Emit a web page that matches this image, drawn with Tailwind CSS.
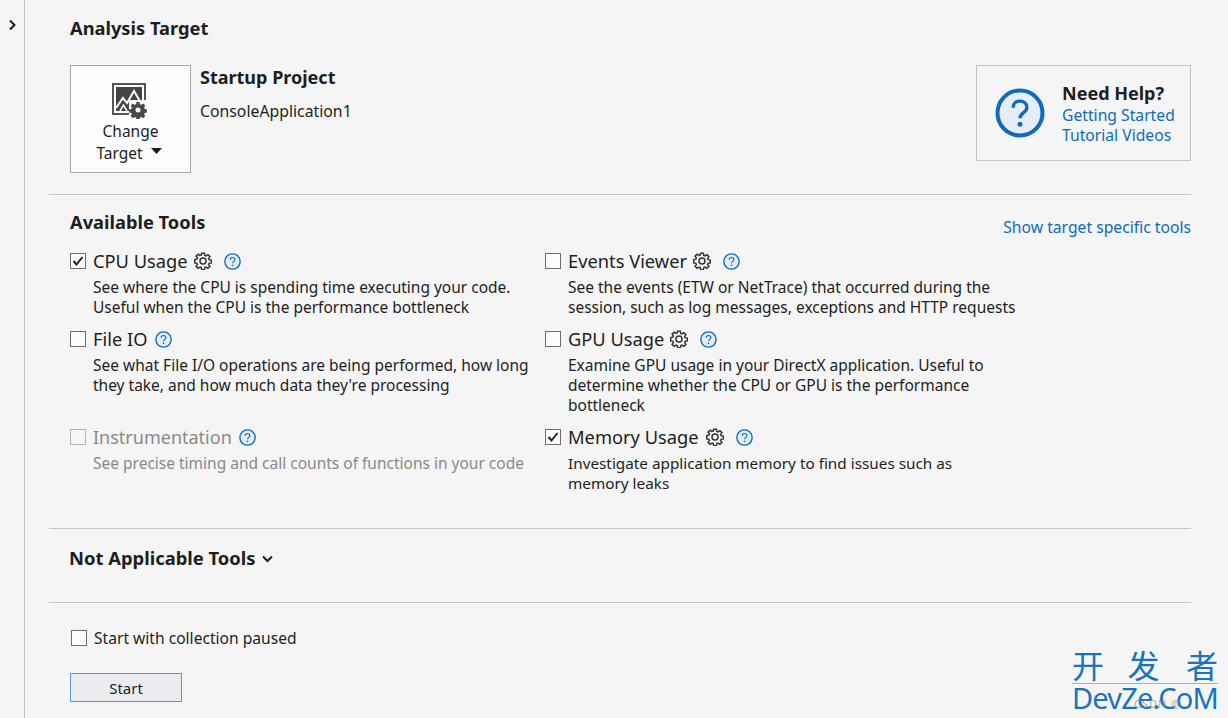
<!DOCTYPE html>
<html lang="en">
  <head>
    <meta charset="UTF-8" />
    <title>Performance Profiler</title>
    <script src="https://cdn.jsdelivr.net/npm/@tailwindcss/browser@4"></script>
  </head>
  <body class="bg-[#f5f5f5] font-['Noto_Sans','Noto_Sans_CJK_SC',sans-serif] text-[#1e1e1e] overflow-hidden">
    <svg class="hidden">
      <symbol id="gear" viewBox="0 0 18 18">
        <path fill="none" stroke="#333" stroke-width="1.500" d="M7.600 1.200h2.800l.4 2.200 1.200.5 1.900-1.300 2 2-1.300 1.900.5 1.200 2.200.4v2.800l-2.200.4-.5 1.200 1.300 1.900-2 2-1.900-1.300-1.200.5-.4 2.200H7.600l-.4-2.200-1.200-.5-1.900 1.300-2-2 1.300-1.900-.5-1.200-2.200-.4V7.600l2.200-.4.5-1.200-1.300-1.900 2-2 1.900 1.300 1.200-.5z" />
        <circle cx="9" cy="9" r="3" fill="none" stroke="#333" stroke-width="1.500" />
      </symbol>
      <symbol id="help" viewBox="0 0 16 16">
        <circle cx="8" cy="8" r="7.200" fill="#e6edf6" stroke="#0f6cbd" stroke-width="1.300" />
        <path fill="none" stroke="#0f6cbd" stroke-width="1.100" d="M5.800 6.300c0-1.300 1-2.100 2.200-2.100s2.200.8 2.200 2c0 1.700-2.200 1.700-2.200 3.500" />
        <circle cx="8" cy="11.600" r=".8" fill="#0f6cbd" />
      </symbol>
    </svg>

    <div class="flex h-[718px] w-[1228px]">
      <!-- collapsed rail -->
      <div class="w-[25px] shrink-0 border-r border-[#c4c4c4] pt-[19px] pl-[8px]">
        <svg class="w-[9px] h-[12px]" viewBox="0 0 9 12"><path fill="none" stroke="#1e1e1e" stroke-width="2" d="M2 1.500 6.500 6 2 10.500" /></svg>
      </div>

      <main class="ml-[24px] w-[1142px]">
        <!-- analysis target -->
        <section class="h-[195px] border-b border-[#c8c8c8] pl-[21px] pt-[14px]">
          <h2 class="text-[18.300px] leading-[27px] font-bold">Analysis Target</h2>
          <div class="flex mt-[24px]">
            <button class="w-[121px] h-[108px] bg-[#fcfcfc] border border-[#a8a8a8] flex flex-col items-center pt-[17px] text-[15.500px] leading-[22px]">
              <svg class="w-[36px] h-[36px] shrink-0 ml-[-1px]" viewBox="0 0 36 36">
                <rect x="1" y="1" width="32" height="30" fill="#fff" stroke="#555" stroke-width="2" />
                <rect x="4" y="4" width="26" height="24" fill="#444" />
                <path fill="none" stroke="#fff" stroke-width="2" d="M4 25 11 15 15 20 22 8 29 20" />
                <path fill="none" stroke="#fff" stroke-width="1.500" d="M8 28 11.500 22 15 28" />
                <path fill="#fcfcfc" d="M17 17h19v19H17z" />
                <path fill="#484848" fill-rule="evenodd" d="M24.500 19h3l.5 2.200 1.300.6 1.900-1.200 2.100 2.100-1.200 1.900.6 1.300 2.200.5v3l-2.200.5-.6 1.300 1.200 1.900-2.100 2.100-1.900-1.200-1.300.6-.5 1.900h-3l-.5-1.900-1.300-.6-1.900 1.200-2.100-2.100 1.200-1.900-.6-1.300-2.200-.5v-3l2.200-.5.6-1.300-1.200-1.900 2.100-2.100 1.900 1.200 1.300-.6zM26 24.500a2.500 2.500 0 1 0 0 5 2.500 2.500 0 0 0 0-5z" />
              </svg>
              <span class="mt-[1px]">Change</span>
              <span class="flex items-start pr-[3px]">Target
                <svg class="w-[11px] h-[6px] ml-[8px] mt-[6px]" viewBox="0 0 11 6"><path fill="#1e1e1e" d="M0 0h11L5.500 6z" /></svg>
              </span>
            </button>
            <div class="ml-[9px]">
              <h3 class="text-[18px] leading-[24px] font-bold">Startup Project</h3>
              <p class="text-[15.800px] leading-[22px] mt-[11px]">ConsoleApplication1</p>
            </div>
            <div class="ml-auto w-[215px] h-[96px] border border-[#c4c4c4] flex items-center pl-[18px]">
              <svg class="w-[50px] h-[50px] shrink-0" viewBox="0 0 16 16"><use href="#help" /></svg>
              <div class="ml-[17px]">
                <p class="text-[18px] leading-[22px] font-bold">Need Help?</p>
                <a class="block text-[#0f6cbd] text-[15.700px] leading-[20px] mt-[1px]">Getting Started</a>
                <a class="block text-[#0f6cbd] text-[15.700px] leading-[20px]">Tutorial Videos</a>
              </div>
            </div>
          </div>
        </section>

        <!-- available tools -->
        <section class="h-[334px] border-b border-[#c8c8c8] pl-[21px] relative">
          <div class="flex justify-between pt-[13px]">
            <h2 class="text-[18.300px] leading-[27px] font-bold">Available Tools</h2>
            <a class="text-[#0f6cbd] text-[15.700px] leading-[22px] mt-[8px]">Show target specific tools</a>
          </div>

          <div class="grid grid-cols-[475px_490px] grid-rows-[78px_98px_80px] mt-[10px]">
            <div>
              <div class="flex items-center h-[26px]">
                <span class="w-[16px] h-[16px] border border-[#6e6e6e] bg-[#fcfcfc] flex items-center justify-center"><svg class="w-[12px] h-[12px]" viewBox="0 0 12 12"><path fill="none" stroke="#222" stroke-width="2" d="M1.500 6 4.500 9.500 10.500 2" /></svg></span>
                <span class="ml-[7px] text-[18.300px]">CPU Usage</span>
                <svg class="w-[18px] h-[18px] ml-[6px]"><use href="#gear" /></svg>
                <svg class="w-[17px] h-[17px] ml-[12px]"><use href="#help" /></svg>
              </div>
              <p class="ml-[23px] mt-[3px] text-[15.500px] leading-[20px]">See where the CPU is spending time executing your code.<br />Useful when the CPU is the performance bottleneck</p>
            </div>
            <div>
              <div class="flex items-center h-[26px]">
                <span class="w-[16px] h-[16px] border border-[#6e6e6e] bg-[#fcfcfc]"></span>
                <span class="ml-[7px] text-[18.300px]">Events Viewer</span>
                <svg class="w-[18px] h-[18px] ml-[6px]"><use href="#gear" /></svg>
                <svg class="w-[17px] h-[17px] ml-[12px]"><use href="#help" /></svg>
              </div>
              <p class="ml-[23px] mt-[3px] text-[15.500px] leading-[20px]">See the events (ETW or NetTrace) that occurred during the<br />session, such as log messages, exceptions and HTTP requests</p>
            </div>
            <div>
              <div class="flex items-center h-[26px]">
                <span class="w-[16px] h-[16px] border border-[#6e6e6e] bg-[#fcfcfc]"></span>
                <span class="ml-[7px] text-[18.300px]">File IO</span>
                <svg class="w-[17px] h-[17px] ml-[8px]"><use href="#help" /></svg>
              </div>
              <p class="ml-[23px] mt-[3px] text-[15.500px] leading-[20px]">See what File I/O operations are being performed, how long<br />they take, and how much data they're processing</p>
            </div>
            <div>
              <div class="flex items-center h-[26px]">
                <span class="w-[16px] h-[16px] border border-[#6e6e6e] bg-[#fcfcfc]"></span>
                <span class="ml-[7px] text-[18.300px]">GPU Usage</span>
                <svg class="w-[18px] h-[18px] ml-[6px]"><use href="#gear" /></svg>
                <svg class="w-[17px] h-[17px] ml-[12px]"><use href="#help" /></svg>
              </div>
              <p class="ml-[23px] mt-[3px] text-[15.500px] leading-[20px]">Examine GPU usage in your DirectX application. Useful to<br />determine whether the CPU or GPU is the performance<br />bottleneck</p>
            </div>
            <div>
              <div class="flex items-center h-[26px]">
                <span class="w-[16px] h-[16px] border border-[#b4b4b4]"></span>
                <span class="ml-[7px] text-[18px] text-[#8a8a8a]">Instrumentation</span>
                <svg class="w-[17px] h-[17px] ml-[7px]"><use href="#help" /></svg>
              </div>
              <p class="ml-[23px] mt-[3px] text-[15.500px] leading-[20px] text-[#8a8a8a]">See precise timing and call counts of functions in your code</p>
            </div>
            <div>
              <div class="flex items-center h-[26px]">
                <span class="w-[16px] h-[16px] border border-[#6e6e6e] bg-[#fcfcfc] flex items-center justify-center"><svg class="w-[12px] h-[12px]" viewBox="0 0 12 12"><path fill="none" stroke="#222" stroke-width="2" d="M1.500 6 4.500 9.500 10.500 2" /></svg></span>
                <span class="ml-[7px] text-[18.300px]">Memory Usage</span>
                <svg class="w-[18px] h-[18px] ml-[7px]"><use href="#gear" /></svg>
                <svg class="w-[17px] h-[17px] ml-[12px]"><use href="#help" /></svg>
              </div>
              <p class="ml-[23px] mt-[3px] text-[15.300px] leading-[20px]">Investigate application memory to find issues such as<br />memory leaks</p>
            </div>
          </div>
        </section>

        <!-- not applicable -->
        <section class="h-[74px] border-b border-[#c8c8c8] pl-[20px] pt-[15px]">
          <h2 class="flex items-center text-[18.400px] leading-[27px] font-bold">Not Applicable Tools
            <svg class="w-[11px] h-[8px] ml-[6px] mt-[2px]" viewBox="0 0 11 8"><path fill="none" stroke="#1e1e1e" stroke-width="2" d="M1 1.500 5.500 6 10 1.500" /></svg>
          </h2>
        </section>

        <!-- start -->
        <section class="pl-[21px] pt-[25px]">
          <div class="flex items-center h-[20px]">
            <span class="w-[16px] h-[16px] ml-[1px] border border-[#6e6e6e] bg-[#fcfcfc]"></span>
            <span class="ml-[7px] text-[15.600px] leading-[22px]">Start with collection paused</span>
          </div>
          <button class="mt-[25px] block w-[112px] h-[29px] bg-[#ececf0] border border-[#4a9bea] text-[15px] pt-[1px]">Start</button>
        </section>
      </main>
    </div>

    <!-- watermark -->
    <div class="absolute left-[1072px] top-[649px] w-[146px] text-[#1a73bd]">
      <div class="flex justify-between text-[32px] leading-[34px] border-b border-[#7cc0ea]">
        <span>开</span><span class="mr-[3px]">发</span><span>者</span>
      </div>
      <div class="text-[29px] leading-[27px] whitespace-nowrap tracking-[-0.8px]">DevZe.CoM</div>
    </div>
    <div class="absolute left-[1134px] top-[698px] text-[11px] leading-[12px] tracking-[1px] text-[#8a8a8a]/70">CSDN @</div>
  </body>
</html>
